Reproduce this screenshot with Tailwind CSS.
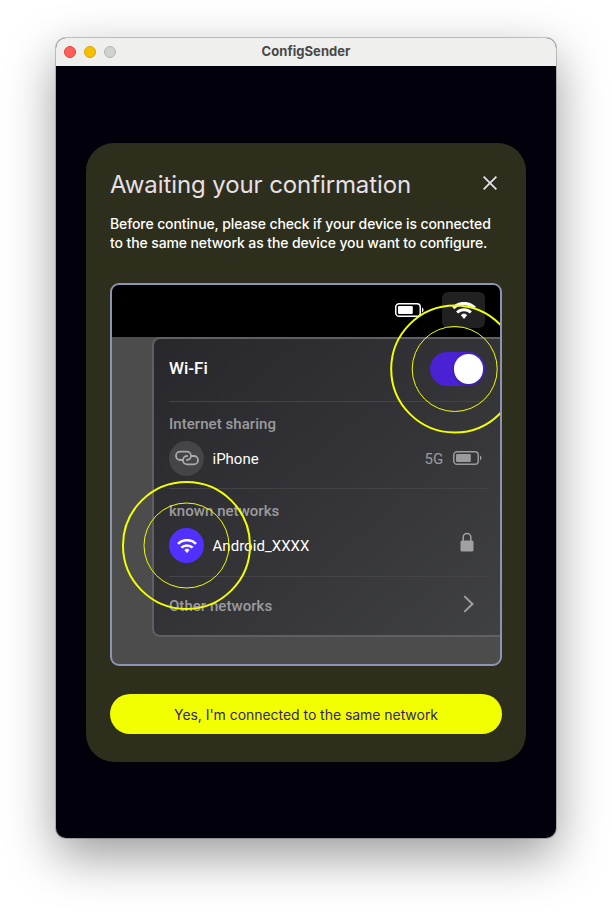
<!DOCTYPE html>
<html lang="en">
<head>
<meta charset="utf-8">
<title>ConfigSender</title>
<script src="https://cdn.jsdelivr.net/npm/@tailwindcss/browser@4"></script>
</head>
<body class="h-[912px] overflow-hidden bg-white px-14 pt-[38px] font-[Inter,sans-serif]">
<svg class="hidden">
  <symbol id="wifi" viewBox="0 0 20 14">
    <path d="M1 4.9a12.8 12.8 0 0 1 18 0" fill="none" stroke="currentColor" stroke-width="2.7"/>
    <path d="M4.3 8.7a8.2 8.2 0 0 1 11.4 0" fill="none" stroke="currentColor" stroke-width="2.5"/>
    <path d="M10 9.9a2.900 2.900 0 0 1 2.300 1L10 13.700l-2.300-2.800a2.900 2.900 0 0 1 2.300-1Z" fill="currentColor" stroke="currentColor" stroke-width=".6" stroke-linejoin="round"/>
  </symbol>
  <symbol id="battery" viewBox="0 0 29 14">
    <rect x=".75" y=".75" width="24.5" height="12.5" rx="3.3" fill="none" stroke="currentColor" stroke-width="1.5"/>
    <rect x="3" y="3" width="14.8" height="8" rx="1.2" fill="currentColor"/>
    <path d="M27 4.6C29 5.300 29 8.700 27 9.400Z" fill="currentColor"/>
  </symbol>
</svg>

<div class="h-[800px] w-[500px] overflow-hidden rounded-[10px] bg-[#02000a] shadow-[0_0_0_1px_rgba(0,0,0,0.2),0_18px_50px_rgba(0,0,0,0.4)]">
  <header class="relative flex h-7 items-center justify-center bg-[#efefed] text-[13px] font-bold tracking-[0.05px] text-[#484848]">
    <div class="absolute left-2 top-2 flex gap-2">
      <span class="size-3 rounded-full border border-[#e2463f] bg-[#ff5f57]"></span>
      <span class="size-3 rounded-full border border-[#d9a400] bg-[#f6c000]"></span>
      <span class="size-3 rounded-full border border-[#b5b5b4] bg-[#d1d1d0]"></span>
    </div>
    ConfigSender
  </header>

  <main class="mx-[30px] mt-[77px] h-[619px] rounded-[28px] bg-[#2d2e1b] px-6 pt-[25px]">
    <div class="flex h-8 items-start justify-between">
      <h1 class="pt-px text-2xl leading-8 tracking-[-0.1px] text-[#e6e0e9]">Awaiting your confirmation</h1>
      <button aria-label="Close" class="mr-[5px] mt-2"><svg class="block size-[14px]" viewBox="0 0 14 14" fill="none" stroke="#e6e0e9" stroke-width="1.8"><path d="M.6.6l12.800 12.800M13.400.6L.6 13.400"/></svg></button>
    </div>
    <p class="mt-[14px] whitespace-nowrap text-sm font-medium leading-[19px] tracking-[-0.11px] text-white">Before continue, please check if your device is connected<br>to the same network as the device you want to configure.</p>

    <section class="relative mt-[31px] h-[383px] w-[392px] overflow-hidden rounded-[9px] border-2 border-[#8e93b5] bg-[#4c4c4c] font-[Roboto,sans-serif]">
      <div class="flex h-[52px] items-start justify-end bg-black pr-[15px] text-white">
        <svg class="mt-[17.500px] h-[14px] w-[29px]"><use href="#battery"/></svg>
        <div class="ml-[18px] mt-[7px] flex h-9 w-[43px] items-center justify-center rounded-md bg-[#212121]">
          <svg class="h-[17px] w-6"><use href="#wifi"/></svg>
        </div>
      </div>

      <div class="ml-10 h-[300px] w-[360px] rounded-l-lg border-2 border-[#606064] bg-linear-to-br from-[#28272c] to-[#404143] pl-[15px] text-[15px] leading-5 text-[#9b9b9d]">
        <div class="w-[320px]">
          <div class="flex h-[60px] items-center justify-between pr-1">
            <span class="-mt-0.5 text-[17px] font-medium text-white">Wi-Fi</span>
            <div class="flex h-[34px] w-[55px] items-center justify-end rounded-full bg-[#4a22d4] pr-0.5"><span class="size-[29.500px] rounded-full bg-white shadow-[0_1px_3px_rgba(0,0,0,0.3)]"></span></div>
          </div>
          <div class="mt-0.5 h-px bg-[#444448]"></div>
          <h2 class="mt-3 font-medium tracking-[0.05px]">Internet sharing</h2>
          <div class="mt-[7px] flex h-[35px] items-center pr-[7px]">
            <div class="flex size-[35px] items-center justify-center rounded-full bg-[#454547]">
              <svg class="mb-px h-4 w-6" viewBox="0 0 24 16" fill="none" stroke="#aaaaab" stroke-width="1.8" stroke-linecap="round"><path d="M7.600 10H5.200a4.200 4.200 0 0 1 0-8.400h6.600a4.200 4.200 0 0 1 0 8.400"/><path d="M16.400 6h2.400a4.200 4.200 0 0 1 0 8.400h-6.600a4.200 4.200 0 0 1 0-8.400"/></svg>
            </div>
            <span class="ml-[8.500px] text-[15px] text-white">iPhone</span>
            <span class="ml-auto tracking-[-0.1px]">5G</span>
            <svg class="mb-px ml-[10px] h-[14px] w-[29px]"><use href="#battery"/></svg>
          </div>
          <div class="mt-3 h-px bg-[#434347]"></div>
          <h2 class="mt-3 font-medium tracking-[0.04px]">known networks</h2>
          <div class="mt-[7px] flex h-[35px] items-center">
            <div class="flex size-[35px] items-center justify-center rounded-full bg-[#5230ff] text-white"><svg class="h-[14px] w-5"><use href="#wifi"/></svg></div>
            <span class="ml-[8.500px] tracking-[0.04px] text-white">Android_XXXX</span>
            <svg class="mb-[7px] ml-auto mr-[15px] h-5 w-[14px]" viewBox="0 0 14 20"><path d="M3.200 9V5.200a3.800 3.800 0 0 1 7.600 0V9" fill="none" stroke="#a0a0a2" stroke-width="1.500"/><rect x=".5" y="8.500" width="13" height="11" rx="1.500" fill="#a0a0a2"/></svg>
          </div>
          <div class="mt-[13px] h-px bg-[#444448]"></div>
          <div class="mt-[19px] flex h-5 items-center justify-between pr-[15px]">
            <h2 class="font-medium tracking-[0.04px]">Other networks</h2>
            <svg class="mb-1 h-[18px] w-[11px]" viewBox="0 0 11 18" fill="none" stroke="#a0a0a2" stroke-width="2"><path d="M1.300 1.100l8.200 7.900-8.200 7.900"/></svg>
          </div>
        </div>
      </div>

      <!-- Highlight rings over the toggle and the known network -->
      <svg class="absolute left-0 top-0 h-[379px] w-[388px]" viewBox="112 285 388 379" fill="none" stroke="#f1ff00">
        <circle cx="454.700" cy="369" r="63.500" stroke-width="2"/><circle cx="454.700" cy="369" r="42.500"/>
        <circle cx="186.500" cy="545.500" r="63.500" stroke-width="2"/><circle cx="186.500" cy="545.500" r="42.500"/>
      </svg>
    </section>

    <button class="mt-7 h-10 w-full rounded-full bg-[#f1ff00] pt-0.5 text-sm tracking-[-0.045px] text-[#381e72]">Yes, I'm connected to the same network</button>
  </main>
</div>
</body>
</html>
